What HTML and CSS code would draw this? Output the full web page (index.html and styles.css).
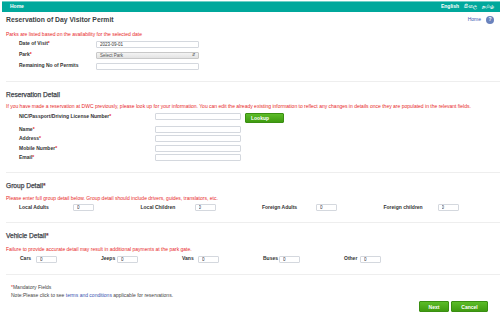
FILE: index.html
```html
<!DOCTYPE html>
<html lang="en">
<head>
  <meta charset="UTF-8">
  <title>Reservation of Day Visitor Permit</title>
  <link rel="stylesheet" href="styles.css">
</head>
<body>
  <div class="topbar">
    <span>Home</span>
    <span class="langs"><span>English</span><span>සිංහල</span><span>தமிழ்</span></span>
  </div>

  <div class="page">
    <div class="title-row">
      <h1>Reservation of Day Visitor Permit</h1>
      <a class="home-link" href="#">Home <span class="help">?</span></a>
    </div>

    <!-- park -->
    <p class="warn first">Parks are listed based on the availability for the selected date</p>
    <div class="fields park">
      <label>Date of Visit<i>*</i></label>
      <input type="text" value="2023-09-01">
      <label>Park<i>*</i></label>
      <div class="select">Select Park <span class="arrows">&#8693;</span></div>
      <label>Remaining No of Permits</label>
      <input type="text">
    </div>

    <!-- reservation detail -->
    <div class="section">
      <h2>Reservation Detail</h2>
      <p class="warn">If you have made a reservation at DWC previously, please look up for your information. You can edit the already existing information to reflect any changes in details once they are populated in the relevant fields.</p>
      <div class="fields person">
        <label>NIC/Passport/Driving License Number<i>*</i></label>
        <div class="with-btn"><input type="text"><button class="btn">Lookup</button></div>
        <label>Name<i>*</i></label>
        <input type="text">
        <label>Address<i>*</i></label>
        <input type="text">
        <label>Mobile Number<i>*</i></label>
        <input type="text">
        <label>Email<i>*</i></label>
        <input type="text">
      </div>
    </div>

    <!-- group -->
    <div class="section">
      <h2>Group Detail<i>*</i></h2>
      <p class="warn">Please enter full group detail below. Group detail should include drivers, guides, translators, etc.</p>
      <div class="group">
        <div class="pair"><label>Local Adults</label><input type="text" value="0"></div>
        <div class="pair"><label>Local Children</label><input type="text" value="0"></div>
        <div class="pair"><label>Foreign Adults</label><input type="text" value="0"></div>
        <div class="pair"><label>Foreign children</label><input type="text" value="0"></div>
      </div>
    </div>

    <!-- vehicles -->
    <div class="section">
      <h2 class="roomy">Vehicle Detail<i>*</i></h2>
      <p class="warn">Failure to provide accurate detail may result in additional payments at the park gate.</p>
      <div class="vehicles">
        <div class="pair"><label>Cars</label><input type="text" value="0"></div>
        <div class="pair"><label>Jeeps</label><input type="text" value="0"></div>
        <div class="pair"><label>Vans</label><input type="text" value="0"></div>
        <div class="pair"><label>Buses</label><input type="text" value="0"></div>
        <div class="pair"><label>Other</label><input type="text" value="0"></div>
      </div>
    </div>

    <div class="section foot">
      <p><i>*</i>Mandatory Fields</p>
      <p>Note:Please click to see <a href="#">terms and conditions</a> applicable for reservations.</p>
      <div class="actions">
        <button class="btn">Next</button>
        <button class="btn">Cancel</button>
      </div>
    </div>
  </div>
</body>
</html>
```

FILE: styles.css
```css
* {
  box-sizing: border-box;
}
body {
  margin: 0;
  font-family: "Liberation Sans", Arial, sans-serif;
  font-size: 5px;
  line-height: 1.15;
  color: #333;
  background: #fff;
}
i {
  font-style: normal;
  color: #e82828;
}
.topbar {
  margin: 1px 0 0 2px;
  height: 11px;
  background: #00a89c;
  border-top: 1px solid #6fcfc7;
  display: flex;
  justify-content: space-between;
  align-items: center;
  padding: 0 6px 0 8px;
  color: #fff;
  font-weight: bold;
}
.langs span {
  margin-left: 5px;
}
.page {
  padding-left: 6px;
}
.title-row {
  display: flex;
  justify-content: space-between;
  align-items: center;
  margin-top: 4px;
  padding-right: 6px;
}
h1 {
  margin: 0;
  font-size: 6.8px;
  color: #3b3f45;
}
.home-link {
  display: flex;
  align-items: center;
  gap: 5px;
  color: #3852b0;
  text-decoration: none;
}
.help {
  width: 8px;
  height: 8px;
  border-radius: 50%;
  background: #6a82bd;
  color: #fff;
  font-weight: bold;
  display: flex;
  align-items: center;
  justify-content: center;
}
.warn {
  color: #e82828;
  margin: 0 0 3px;
}
.warn.first {
  margin-top: 8px;
}
label {
  font-weight: bold;
  color: #333;
}
input {
  height: 7px;
  border: 1px solid #d4d8de;
  border-radius: 1px;
  font: 4.5px "Liberation Sans", Arial, sans-serif;
  padding: 0 3px;
  color: #333;
}
.fields {
  display: grid;
  align-items: center;
  row-gap: 3.5px;
  padding-left: 13px;
}
.park {
  grid-template-columns: 77px 103px;
  row-gap: 4px;
  margin-bottom: 1px;
}
.park input {
  width: 103px;
}
.select {
  height: 7px;
  border: 1px solid #c8c8c8;
  border-radius: 1px;
  background: linear-gradient(#f4f4f4, #e2e2e2);
  padding: 0 3px;
  display: flex;
  justify-content: space-between;
  align-items: center;
  color: #555;
  font-size: 4.5px;
}
.arrows {
  font-size: 4px;
}
.section {
  border-top: 1px solid #eee;
  margin-top: 11px;
  padding-top: 9px;
}
h2 {
  margin: 0 0 6px;
  font-size: 6.6px;
  font-weight: normal;
  color: #3e434a;
  -webkit-text-stroke: 0.25px #3e434a;
}
h2.roomy {
  margin-bottom: 7px;
}
.person {
  grid-template-columns: 136px auto;
  row-gap: 2.5px;
  align-items: start;
}
.person label {
  line-height: 7px;
}
.person input {
  width: 86px;
}
.with-btn {
  display: flex;
  align-items: flex-start;
  gap: 4px;
}
.btn {
  font: bold 5px "Liberation Sans", Arial, sans-serif;
  color: #fff;
  background: linear-gradient(#5cbc28, #3f9b10);
  border: 1px solid #3a8f12;
  border-radius: 1px;
  height: 10px;
  padding: 0 5px;
}
.with-btn .btn {
  width: 39px;
  text-align: left;
}
.group {
  display: grid;
  grid-template-columns: repeat(4, 121.5px);
  padding-left: 13px;
  margin-top: 1px;
}
.pair {
  display: flex;
  align-items: center;
}
.group label {
  width: 54px;
}
.pair input {
  width: 21px;
}
.vehicles {
  display: grid;
  grid-template-columns: repeat(5, 81px);
  padding-left: 14px;
  margin-top: 1px;
}
.vehicles label {
  width: 16px;
}
.foot {
  padding-top: 10px;
  padding-left: 5px;
  color: #444;
}
.foot p {
  margin: 0 0 3px;
}
.foot a {
  color: #3852b0;
  text-decoration: none;
}
.actions {
  display: flex;
  justify-content: flex-end;
  gap: 2px;
  padding-right: 12px;
  margin-top: -1px;
}
.actions .btn {
  height: 11px;
  width: 30px;
}
.actions .btn + .btn {
  width: 37px;
}
```
